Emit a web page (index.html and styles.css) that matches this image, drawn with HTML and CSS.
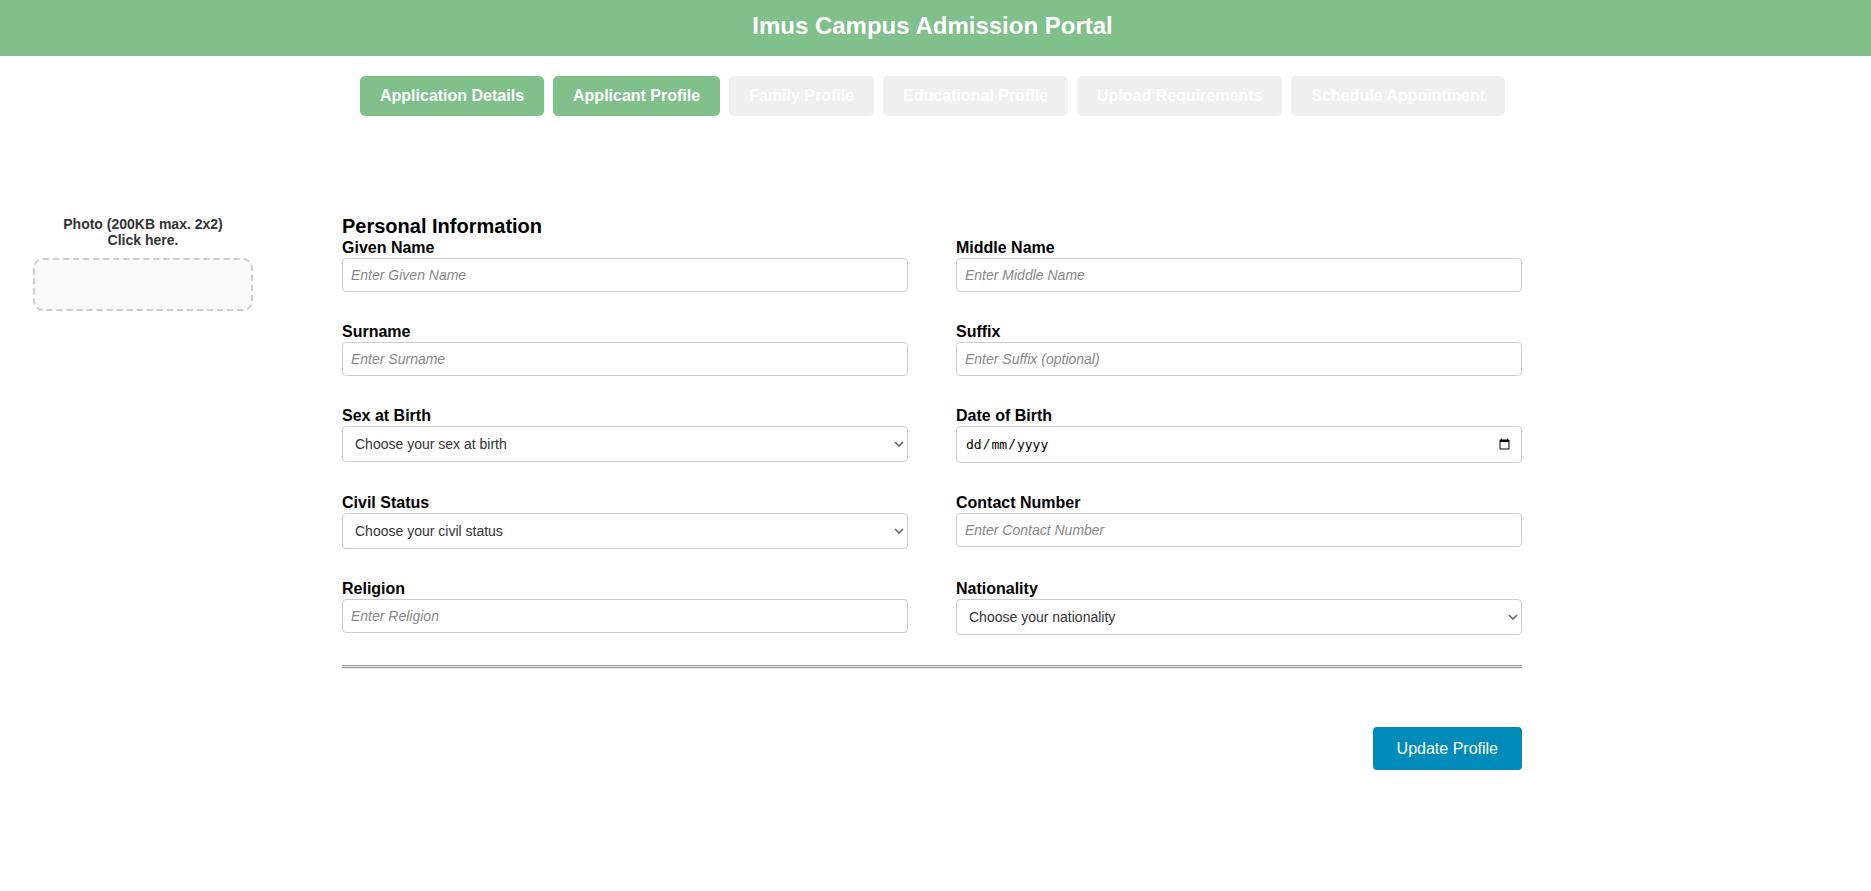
FILE: index.html
```html
<!DOCTYPE html>
<html lang="en">
<head>
<meta charset="utf-8">
<title>Imus Campus Admission Portal</title>
<link rel="stylesheet" href="styles.css">
</head>
<body>
<header class="header"><h1 class="header-title">Imus Campus Admission Portal</h1></header>
<nav class="steps">
  <button class="step active" type="button">Application Details</button>
  <button class="step active" type="button">Applicant Profile</button>
  <button class="step" type="button">Family Profile</button>
  <button class="step" type="button">Educational Profile</button>
  <button class="step" type="button">Upload Requirements</button>
  <button class="step" type="button">Schedule Appointment</button>
</nav>
<form class="profile">
  <aside class="photo">
    <label class="photo-label" for="photo">Photo (200KB max. 2x2)<br>Click here.</label>
    <button class="photo-box" id="photo" type="button"></button>
  </aside>
  <main class="details">
    <h2 class="section-title">Personal Information</h2>
    <div class="fields">
      <div class="field"><label for="given">Given Name</label><input class="control" id="given" type="text" placeholder="Enter Given Name"></div>
      <div class="field"><label for="middle">Middle Name</label><input class="control" id="middle" type="text" placeholder="Enter Middle Name"></div>
      <div class="field"><label for="surname">Surname</label><input class="control" id="surname" type="text" placeholder="Enter Surname"></div>
      <div class="field"><label for="suffix">Suffix</label><input class="control" id="suffix" type="text" placeholder="Enter Suffix (optional)"></div>
      <div class="field"><label for="sex">Sex at Birth</label><select class="control select" id="sex"><option>Choose your sex at birth</option></select></div>
      <div class="field"><label for="birth">Date of Birth</label><input class="control date" id="birth" type="date"></div>
      <div class="field"><label for="civil">Civil Status</label><select class="control select" id="civil"><option>Choose your civil status</option></select></div>
      <div class="field"><label for="contact">Contact Number</label><input class="control" id="contact" type="text" placeholder="Enter Contact Number"></div>
      <div class="field"><label for="religion">Religion</label><input class="control" id="religion" type="text" placeholder="Enter Religion"></div>
      <div class="field"><label for="nationality">Nationality</label><select class="control select" id="nationality"><option>Choose your nationality</option></select></div>
    </div>
    <hr class="divider">
    <div class="actions"><button class="submit" type="submit">Update Profile</button></div>
  </main>
</form>
</body>
</html>
```
FILE: styles.css
```css
* { box-sizing: border-box; }

body {
  margin: 0;
  background: #fff;
  color: #000;
  font-family: Arial, "Liberation Sans", sans-serif;
}

.header {
  padding: 12px 6px 16px 0;
  background: #80c08b;
  text-align: center;
}

.header-title {
  margin: 0;
  color: #fff;
  font-size: 24px;
  line-height: 28px;
}

.steps {
  display: flex;
  justify-content: center;
  gap: 9px;
  padding: 20px 6px 0 0;
}

.step {
  padding: 10px 20px;
  border: 0;
  border-radius: 5px;
  background: #f0f0f0;
  color: #fff;
  font: bold 16px/20px Arial, "Liberation Sans", sans-serif;
}

.step.active { background: #80c08b; }

.profile {
  display: grid;
  grid-template-columns: 220px minmax(0, 1180px);
  column-gap: 89px;
  padding: 100px 33px 0;
}

.photo {
  display: flex;
  flex-direction: column;
  gap: 10px;
}

.photo-label {
  color: #333;
  font-size: 14px;
  font-weight: bold;
  line-height: 16px;
  text-align: center;
}

.photo-box {
  height: 53px;
  border: 2px dashed #ccc;
  border-radius: 10px;
  background: #f9f9f9;
}

.section-title {
  margin: 0 0 4px;
  font-size: 20px;
  line-height: 20px;
}

.fields {
  display: grid;
  grid-template-columns: 1fr 1fr;
  gap: 32px 48px;
}

.field {
  display: flex;
  flex-direction: column;
  gap: 2px;
  font-size: 16px;
  font-weight: bold;
  line-height: 16px;
}

.control {
  width: 100%;
  height: 34px;
  padding: 8px;
  border: 1px solid #ccc;
  border-radius: 4px;
  background: #fff;
  color: #333;
  font-family: Arial, "Liberation Sans", sans-serif;
  font-size: 14px;
}

.control::placeholder {
  color: #888;
  font-style: italic;
}

.select {
  height: 36px;
  padding: 8px 20px 8px 12px;
  appearance: none;
  background: #fff url("data:image/svg+xml,%3Csvg xmlns='http://www.w3.org/2000/svg' width='10' height='6'%3E%3Cpath d='M1 1l4 4 4-4' fill='none' stroke='%23666' stroke-width='1.6'/%3E%3C/svg%3E") no-repeat right 3px center;
}

.date {
  height: 37px;
  color: #000;
  font-family: "DejaVu Sans Mono", monospace;
  font-size: 13px;
}

/* Day first, then month, then year; the slashes fill the free columns. */
.date::-webkit-datetime-edit-fields-wrapper {
  display: inline-grid;
  grid-auto-columns: max-content;
}

.date::-webkit-datetime-edit-text { grid-row: 1; }

.date::-webkit-datetime-edit-day-field {
  grid-row: 1;
  grid-column: 1;
}

.date::-webkit-datetime-edit-month-field {
  grid-row: 1;
  grid-column: 3;
}

.date::-webkit-datetime-edit-year-field {
  grid-row: 1;
  grid-column: 5;
}

.divider {
  height: 4px;
  margin: 30px 0 0;
  border: 0;
  border-top: 3px double #999;
  border-bottom: 1px solid #eee;
  background: #eee;
}

.actions {
  display: flex;
  justify-content: flex-end;
  padding: 58px 0;
}

.submit {
  padding: 12px 24px;
  border: 0;
  border-radius: 4px;
  background: #008cba;
  color: #fff;
  font: 16px/19px Arial, "Liberation Sans", sans-serif;
}
```
